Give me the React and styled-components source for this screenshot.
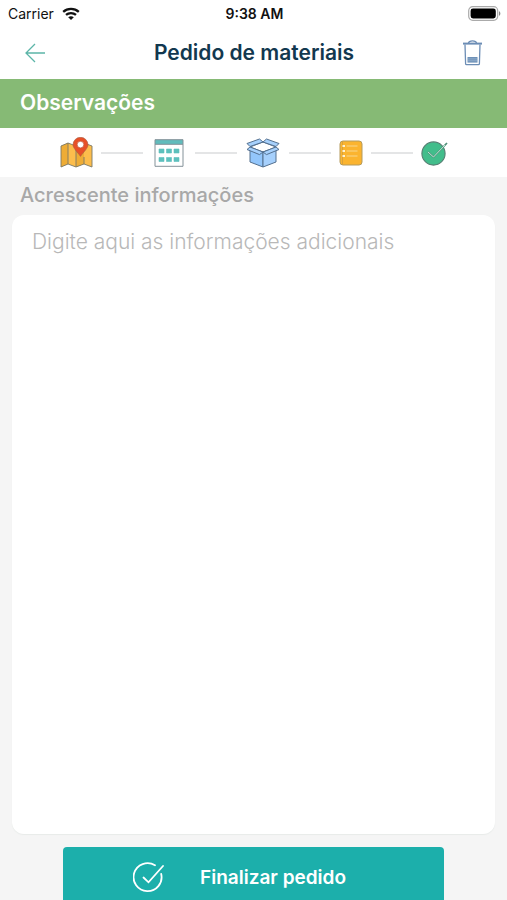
import styled, { createGlobalStyle } from "styled-components";

const GlobalStyle = createGlobalStyle`
  * {
    box-sizing: border-box;
  }

  body {
    margin: 0;
    background: #f5f5f5;
    font-family: Inter, "Open Sans", sans-serif;
  }
`;

const Screen = styled.div`
  min-height: 100vh;
  display: flex;
  flex-direction: column;
`;

const StatusBar = styled.div`
  height: 27px;
  padding: 0 6px 0 8px;
  display: grid;
  grid-template-columns: 1fr auto 1fr;
  align-items: center;
  background: #fff;
  color: #111;
  font-size: 14px;

  & .Carrier {
    display: flex;
    align-items: center;
    gap: 8px;
  }

  & .Battery {
    justify-self: end;
  }
`;

const Time = styled.span`
  font-weight: 600;
`;

const NavBar = styled.header`
  height: 52px;
  padding: 0 24px;
  display: flex;
  align-items: center;
  justify-content: space-between;
  background: #fff;

  & h1 {
    margin: 0;
    color: #12384f;
    font-size: 21px;
    font-weight: 600;
    line-height: 28px;
  }
`;

const IconButton = styled.button`
  display: flex;
  padding: 0;
  border: 0;
  background: none;
  cursor: pointer;
`;

const SectionTitle = styled.h2`
  height: 49px;
  margin: 0;
  padding: 0 20px;
  background: #86ba75;
  color: #fff;
  font-size: 21px;
  font-weight: 600;
  line-height: 48px;
`;

const Steps = styled.div`
  height: 49px;
  padding: 0 59px 0 60px;
  display: flex;
  align-items: center;
  gap: 8px;
  background: #fff;

  & svg {
    flex: none;
  }
`;

const StepLine = styled.span`
  flex: 1;
  height: 2px;
  background: #e4e5e6;
`;

const Form = styled.form`
  flex: 1;
  display: flex;
  flex-direction: column;
  padding: 0 12px;
`;

const Label = styled.label`
  height: 38px;
  padding: 0 8px;
  color: #a8a8a8;
  font-size: 20px;
  font-weight: 500;
  line-height: 36px;
`;

const Notes = styled.textarea`
  flex: 1;
  width: 100%;
  margin: 0 0 13px;
  padding: 14px 20px;
  border: 0;
  border-radius: 12px;
  outline: 0;
  resize: none;
  background: #fff;
  box-shadow: 0 1px 1px #e8ebe9;
  color: #555;
  font-family: inherit;
  font-size: 21px;
  font-weight: 300;
  line-height: 26px;

  &::placeholder {
    color: #b8b8b8;
    opacity: 1;
  }
`;

const SubmitButton = styled.button`
  align-self: center;
  width: 79%;
  height: 53px;
  padding: 8px 28px 0 0;
  display: flex;
  align-items: center;
  justify-content: center;
  gap: 36px;
  border: 0;
  border-radius: 4px 4px 0 0;
  background: #1cafab;
  color: #fff;
  font-family: inherit;
  font-size: 19px;
  font-weight: 600;
  line-height: 24px;
  cursor: pointer;
`;

function WifiIcon() {
  return (
    <svg width="18" height="14" viewBox="0 0 18 14" fill="none" stroke="#111" strokeWidth="2.3">
      <path d="M1.2 4.8C5.6.9 12.4.9 16.8 4.8" />
      <path d="M4 7.9c2.8-2.5 7.2-2.5 10 0" />
      <path d="M6.2 10.2c1.7-1.4 3.9-1.4 5.6 0L9 13z" fill="#111" stroke="none" />
    </svg>
  );
}

function BatteryIcon() {
  return (
    <svg className="Battery" width="33" height="15" viewBox="0 0 33 15">
      <rect x=".7" y=".7" width="29" height="13.6" rx="4" fill="#fff" stroke="#aaa" strokeWidth="1.2" />
      <rect x="2.6" y="2.6" width="25.2" height="9.8" rx="2.4" fill="#000" />
      <path d="M31 5.2c1.8.7 1.8 3.9 0 4.6z" fill="#888" />
    </svg>
  );
}

function BackIcon() {
  return (
    <svg width="22" height="20" viewBox="0 0 22 20" fill="none" stroke="#5cb5a8" strokeWidth="1.3">
      <path d="M21 10H2M11 1L2 10l9 9" />
    </svg>
  );
}

function TrashIcon() {
  return (
    <svg width="21" height="26" viewBox="0 0 21 26" fill="none" stroke="#6c8db5" strokeWidth="1.3">
      <path d="M1 3.6h19" strokeWidth="2" />
      <path d="M6.5 3C6.8 1.2 8 .8 10.5.8s3.7.4 4 2.2" />
      <path d="M3 4.5l.6 19.2c0 .6.4 1 1 1h11.8c.6 0 1-.4 1-1L18 4.5" />
      <path d="M5.5 17h10v5.6h-10z" fill="#6d91b8" stroke="none" />
      <path d="M5.5 18.9h10M5.5 20.8h10" stroke="#b5c8dc" strokeWidth=".5" />
    </svg>
  );
}

function MapIcon() {
  return (
    <svg width="33" height="32" viewBox="0 0 33 32">
      <path d="M1 9l7-3 8 3 8-3 8 3v21l-8-3-8 3-8-3-7 3z" fill="#fcbd4c" />
      <path d="M1 9l7-3v21l-7 3zM16 9l8-3v21l-8 3z" fill="#eeac35" />
      <path
        d="M1 9l7-3 8 3 8-3 8 3v21l-8-3-8 3-8-3-7 3zM8 6v21M16 9v21M24 20v7"
        fill="none"
        stroke="#7c7967"
        strokeWidth=".9"
      />
      <path d="M20.5 19.4C17 14.6 13 11 13 7.8a7.5 7.5 0 0115 0c0 3.2-4 6.8-7.5 11.6z" fill="#e75028" stroke="#a65d43" strokeWidth=".6" />
      <circle cx="20.5" cy="7.6" r="3.3" fill="#fff" stroke="#bf5a3d" strokeWidth=".7" />
    </svg>
  );
}

function CalendarIcon() {
  return (
    <svg width="36" height="28" viewBox="0 0 36 28">
      <path d="M4 .7h28v26.6H4z" fill="#fff" />
      <path d="M4 .7h28v4.6H4z" fill="#60bcbc" />
      <path d="M4 .7h28v26.6H4zM4 5.3h28" fill="none" stroke="#849299" strokeWidth="1" />
      <path
        d="M8 10h5v4H8zM15.5 10h5v4h-5zM23 10h5v4h-5zM8 18.5h5v4H8zM15.5 18.5h5v4h-5zM23 18.5h5v4h-5z"
        fill="#5dc0bd"
        stroke="#5dc0bd"
        strokeWidth=".6"
      />
    </svg>
  );
}

function BoxIcon() {
  return (
    <svg width="36" height="30" viewBox="0 0 36 30" stroke="#54708f" strokeWidth="1" strokeLinejoin="round">
      <path d="M18 4L31 9l-13 5L5 9z" fill="#fff" />
      <path d="M5 11l13 3v15L5 24z" fill="#93c6fb" />
      <path d="M31 11l-13 3v15l13-5z" fill="#a6d0fc" />
      <path d="M5 8.5L18 4l-3.5-3L2 5.5z" fill="#a6d0fc" />
      <path d="M31 8.5L18 4l3.5-3L34 5.5z" fill="#a6d0fc" />
      <path d="M5 9l13 5-3.5 2.6L2 11.5z" fill="#a6d0fc" />
      <path d="M31 9l-13 5 3.5 2.6L34 11.5z" fill="#a6d0fc" />
    </svg>
  );
}

function ListIcon() {
  return (
    <svg width="24" height="26" viewBox="0 0 24 26">
      <rect x="1" y="1" width="22" height="24" rx="3" fill="#fbb42f" stroke="#b49b5e" strokeWidth="1" />
      <path d="M3.5 1v24" stroke="#d29d3d" strokeWidth=".8" />
      <path d="M7.5 6h11M7.5 11h11M7.5 16h11" stroke="#f8d78e" strokeWidth="1" />
      <path d="M3.5 6H6M3.5 11H6M3.5 16H6" stroke="#fff2cf" strokeWidth="2" />
    </svg>
  );
}

function DoneIcon() {
  return (
    <svg width="27" height="26" viewBox="0 0 27 26" fill="none">
      <circle cx="12.5" cy="13.5" r="11.6" fill="#42bd8b" stroke="#587e73" strokeWidth="1.1" />
      <path d="M7 12l5.5 5L26 3" stroke="#4f8f78" strokeWidth="1.8" />
      <path d="M7 12l5.5 5L24 5" stroke="#bfe7d7" strokeWidth="1" />
    </svg>
  );
}

function CheckIcon() {
  return (
    <svg width="31" height="31" viewBox="0 0 31 31" fill="none" stroke="#fff" strokeWidth="1.8" strokeLinecap="round">
      <path d="M22 3.3A14 14 0 1028.2 12" />
      <path d="M10.5 15.5l5 4.8L30 4" />
    </svg>
  );
}

function App() {
  return (
    <Screen>
      <GlobalStyle />
      <StatusBar>
        <div className="Carrier">
          <span>Carrier</span>
          <WifiIcon />
        </div>
        <Time>9:38 AM</Time>
        <BatteryIcon />
      </StatusBar>
      <NavBar>
        <IconButton type="button" aria-label="Voltar">
          <BackIcon />
        </IconButton>
        <h1>Pedido de materiais</h1>
        <IconButton type="button" aria-label="Excluir">
          <TrashIcon />
        </IconButton>
      </NavBar>
      <SectionTitle>Observações</SectionTitle>
      <Steps>
        <MapIcon />
        <StepLine />
        <CalendarIcon />
        <StepLine />
        <BoxIcon />
        <StepLine />
        <ListIcon />
        <StepLine />
        <DoneIcon />
      </Steps>
      <Form onSubmit={(e) => e.preventDefault()}>
        <Label htmlFor="notes">Acrescente informações</Label>
        <Notes id="notes" placeholder="Digite aqui as informações adicionais" />
        <SubmitButton type="submit">
          <CheckIcon />
          Finalizar pedido
        </SubmitButton>
      </Form>
    </Screen>
  );
}

export default App;
